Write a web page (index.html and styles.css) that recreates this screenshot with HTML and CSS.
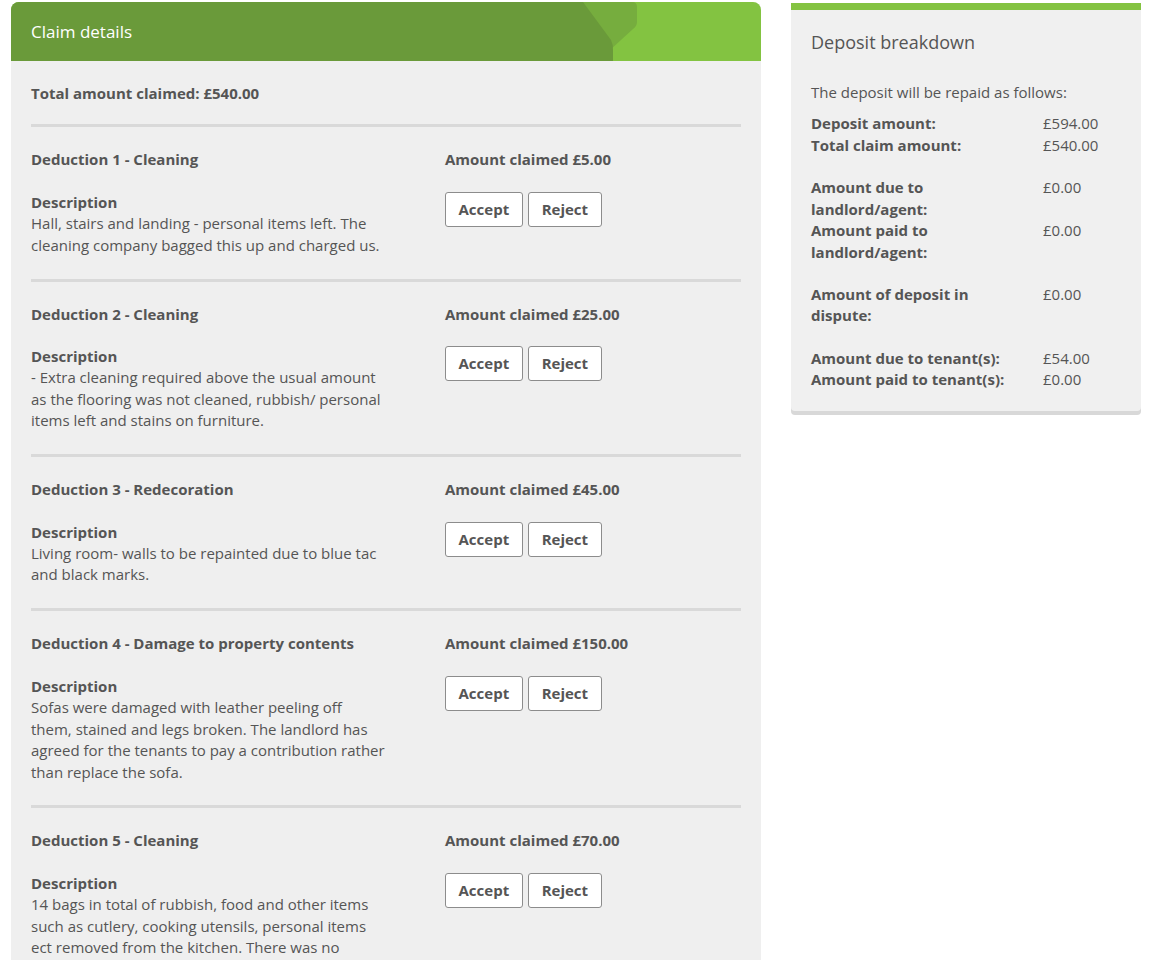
FILE: index.html
```html
<!DOCTYPE html>
<html>
<head>
    <title>Claim details</title>
    <link rel="stylesheet" href="styles.css">
</head>
<body>
    <div class="page">
        <div class="claim-card">
            <div class="claim-header">
                <svg class="header-art" viewBox="0 0 750 59" preserveAspectRatio="none">
                    <path d="M560 0 H621 Q626 0 626 5 V20 Q626 24 622 27 L587 59 H560 Z" fill="#76ad3e"/>
                    <path d="M0 0 H572 L600 38 Q602 42 602 48 V59 H0 Z" fill="#6a9a3a"/>
                </svg>
                <h2>Claim details</h2>
            </div>
            <div class="claim-body">
                <div class="claim-total">Total amount claimed: £540.00</div>

                <div class="deduction">
                    <div class="deduction-main">
                        <h3>Deduction 1 - Cleaning</h3>
                        <h4>Description</h4>
                        <p>Hall, stairs and landing - personal items left. The cleaning company bagged this up and charged us.</p>
                    </div>
                    <div class="deduction-side">
                        <h3>Amount claimed £5.00</h3>
                        <div class="actions"><button class="btn">Accept</button><button class="btn">Reject</button></div>
                    </div>
                </div>

                <div class="deduction">
                    <div class="deduction-main">
                        <h3>Deduction 2 - Cleaning</h3>
                        <h4>Description</h4>
                        <p>- Extra cleaning required above the usual amount as the flooring was not cleaned, rubbish/ personal items left and stains on furniture.</p>
                    </div>
                    <div class="deduction-side">
                        <h3>Amount claimed £25.00</h3>
                        <div class="actions"><button class="btn">Accept</button><button class="btn">Reject</button></div>
                    </div>
                </div>

                <div class="deduction">
                    <div class="deduction-main">
                        <h3>Deduction 3 - Redecoration</h3>
                        <h4>Description</h4>
                        <p>Living room- walls to be repainted due to blue tac and black marks.</p>
                    </div>
                    <div class="deduction-side">
                        <h3>Amount claimed £45.00</h3>
                        <div class="actions"><button class="btn">Accept</button><button class="btn">Reject</button></div>
                    </div>
                </div>

                <div class="deduction">
                    <div class="deduction-main">
                        <h3>Deduction 4 - Damage to property contents</h3>
                        <h4>Description</h4>
                        <p>Sofas were damaged with leather peeling off them, stained and legs broken. The landlord has agreed for the tenants to pay a contribution rather than replace the sofa.</p>
                    </div>
                    <div class="deduction-side">
                        <h3>Amount claimed £150.00</h3>
                        <div class="actions"><button class="btn">Accept</button><button class="btn">Reject</button></div>
                    </div>
                </div>

                <div class="deduction">
                    <div class="deduction-main">
                        <h3>Deduction 5 - Cleaning</h3>
                        <h4>Description</h4>
                        <p>14 bags in total of rubbish, food and other items such as cutlery, cooking utensils, personal items ect removed from the kitchen. There was no evidence of this at the check in.</p>
                    </div>
                    <div class="deduction-side">
                        <h3>Amount claimed £70.00</h3>
                        <div class="actions"><button class="btn">Accept</button><button class="btn">Reject</button></div>
                    </div>
                </div>
            </div>
        </div>

        <div class="breakdown">
            <h2>Deposit breakdown</h2>
            <p class="intro">The deposit will be repaid as follows:</p>
            <div class="group">
                <div class="label">Deposit amount:</div><div class="value">£594.00</div>
                <div class="label">Total claim amount:</div><div class="value">£540.00</div>
            </div>
            <div class="group">
                <div class="label">Amount due to landlord/agent:</div><div class="value">£0.00</div>
                <div class="label">Amount paid to landlord/agent:</div><div class="value">£0.00</div>
            </div>
            <div class="group">
                <div class="label">Amount of deposit in dispute:</div><div class="value">£0.00</div>
            </div>
            <div class="group">
                <div class="label">Amount due to tenant(s):</div><div class="value">£54.00</div>
                <div class="label">Amount paid to tenant(s):</div><div class="value">£0.00</div>
            </div>
        </div>
    </div>
</body>
</html>
```

FILE: styles.css
```css
body {
    margin: 0;
    font-family: "Open Sans", Arial, sans-serif;
    font-size: 15px;
    line-height: 1.42857;
    color: #555;
    background: #fff;
}

.page {
    display: flex;
    align-items: flex-start;
    gap: 30px;
    padding: 2px 11px 0;
}

/* left card */
.claim-card {
    width: 750px;
    flex: none;
    background: #efefef;
    border-radius: 8px 8px 0 0;
    overflow: hidden;
}

.claim-header {
    position: relative;
    height: 59px;
    background: #83c341;
    display: flex;
    align-items: center;
}

.header-art {
    position: absolute;
    left: 0;
    top: 0;
    width: 100%;
    height: 100%;
}

.claim-header h2 {
    position: relative;
    margin: 2px 0 0 20px;
    font-size: 17px;
    font-weight: 400;
    color: #fff;
}

.claim-body {
    padding: 0 20px;
}

.claim-total {
    font-weight: 700;
    padding: 22px 0 20px;
    border-bottom: 3px solid #d9d9d9;
}

.deduction {
    display: grid;
    grid-template-columns: 414px 1fr;
    padding: 22px 0 22.5px;
    border-bottom: 3px solid #d9d9d9;
}

.deduction h3,
.deduction h4 {
    margin: 0;
    font-size: 15px;
    font-weight: 700;
}

.deduction h3 {
    margin-bottom: 21px;
}

.deduction p {
    margin: 0;
    max-width: 355px;
}

.actions {
    display: flex;
    gap: 5px;
}

.btn {
    font-family: inherit;
    font-size: 15px;
    font-weight: 700;
    color: #555;
    background: #fff;
    border: 1px solid #8c8c8c;
    border-radius: 3px;
    padding: 6px 13px 6px 12.5px;
    line-height: 1.42857;
}

/* right panel */
.breakdown {
    width: 350px;
    flex: none;
    box-sizing: border-box;
    margin-top: 1px;
    background: #f0f0f0;
    border-top: 7px solid #84c341;
    border-radius: 0 0 4px 4px;
    box-shadow: 0 4px 0 #d8d8d8;
    padding: 19px 20px 20px;
}

.breakdown h2 {
    margin: 0;
    font-size: 18px;
    font-weight: 400;
    line-height: 26px;
}

.breakdown .intro {
    margin: 27px 0 10px;
}

.group {
    display: grid;
    grid-template-columns: 232px 1fr;
    margin-bottom: 21px;
}

.group:last-child {
    margin-bottom: 0;
}

.group .label {
    font-weight: 700;
    padding-right: 15px;
}
```
